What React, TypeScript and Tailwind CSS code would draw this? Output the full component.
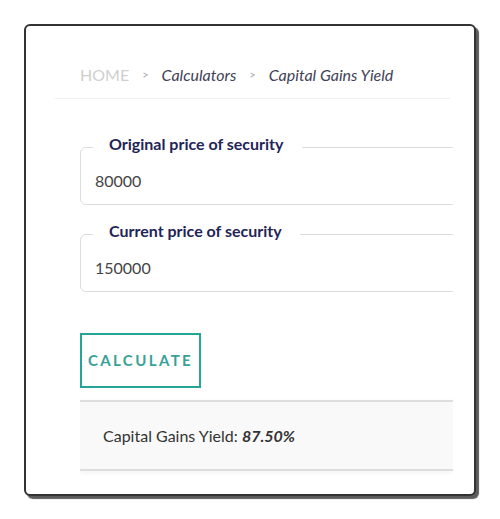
import React from "react";

function Field({ label, value }: { label: string; value: string }) {
  return (
    <fieldset className="w-[400px] border border-[#dcdcdc] rounded-[6px] px-0">
      <legend className="ml-[12px] px-[16px] pr-[18px] pb-[6px] text-[16px] leading-[20px] font-bold text-[#1f2557]">
        {label}
      </legend>
      <div className="pl-[14px] pt-[11px] pb-[13px] text-[16px] leading-[20px] text-[#444]">
        {value}
      </div>
    </fieldset>
  );
}

export default function App() {
  return (
    <div className="w-[500px] h-[519px] bg-white pt-[24px] pl-[24px]" style={{ fontFamily: "Lato, 'Open Sans', sans-serif" }}>
      <div className="w-[452px] h-[472px] border-2 border-[#333] rounded-[6px] bg-white shadow-[3px_3px_1px_#5a5a5a]">
        <div className="ml-[29px] w-[395px] h-[73px] border-b border-[#f0f0f0] pt-[39px] pl-[25px] flex items-start gap-[13px] leading-[20px]">
          <span className="text-[16px] text-[#cfcfcf]">HOME</span>
          <span className="text-[11px] text-[#aaa]">&gt;</span>
          <span className="text-[16px] italic text-[#3f4256]">Calculators</span>
          <span className="text-[11px] text-[#aaa]">&gt;</span>
          <span className="text-[16px] italic text-[#3f4256]">Capital Gains Yield</span>
        </div>

        <div className="ml-[54px] w-[373px] overflow-hidden">
          <div className="mt-[35px]">
            <Field label="Original price of security" value="80000" />
          </div>
          <div className="mt-[16px]">
            <Field label="Current price of security" value="150000" />
          </div>

          <button className="mt-[41px] w-[121px] h-[55px] border-2 border-[#25a596] text-[15px] font-bold tracking-[2.4px] text-[#38a197] flex items-center justify-center">
            CALCULATE
          </button>

          <div className="mt-[12px] mb-[4px] h-[71px] border-y-2 border-[#dedede] bg-[#f9f9f9] shadow-[0_2px_6px_rgba(0,0,0,0.05)] pl-[23px] flex items-center text-[16px] text-[#333]">
            <span>
              Capital Gains Yield: <span className="italic font-bold">87.50%</span>
            </span>
          </div>
        </div>
      </div>
    </div>
  );
}
